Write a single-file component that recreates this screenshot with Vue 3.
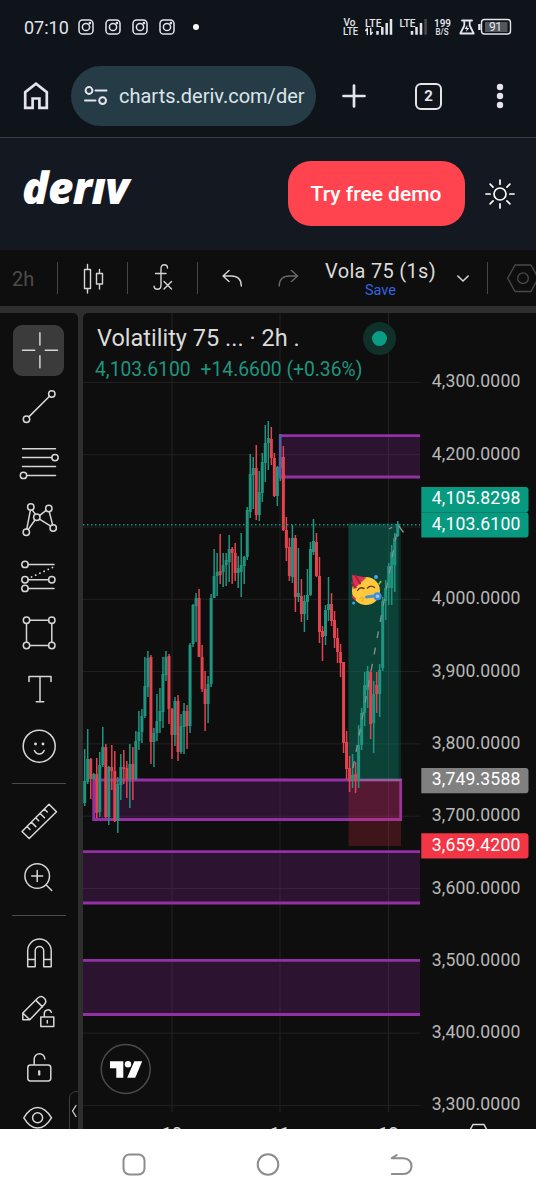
<template>
  <div class="screen">
    <!-- status bar -->
    <div class="status-bar">
      <span class="clock">07:10</span>
      <svg v-for="n in 4" :key="n" class="insta" viewBox="0 0 16 16">
        <rect x="1" y="1" width="14" height="14" rx="3.6" />
        <circle cx="8" cy="8" r="3.6" />
        <circle cx="11.9" cy="4.1" r=".6" />
      </svg>
      <span class="more-dot"></span>
      <svg class="signals" viewBox="342 14 172 26">
        <g class="tiny">
          <text x="343.5" y="25.8" textLength="12" lengthAdjust="spacingAndGlyphs">Vo</text>
          <text x="343" y="35" textLength="15" lengthAdjust="spacingAndGlyphs">LTE</text>
          <text x="365" y="26.8" textLength="16.5" lengthAdjust="spacingAndGlyphs">LTE</text>
          <text x="399.5" y="26.8" textLength="16" lengthAdjust="spacingAndGlyphs">LTE</text>
          <text x="434" y="27.3" textLength="17" lengthAdjust="spacingAndGlyphs" class="speed">199</text>
          <text x="435.5" y="35" textLength="13" lengthAdjust="spacingAndGlyphs" class="unit">B/S</text>
        </g>
        <path class="thin" d="M367.3 34.5v-6m0 0-1.6 2m5-2v6m0 0 1.6-2" />
        <path class="bars" d="M377.5 31v3.7M382.3 27v7.7M386.7 23v11.7M391 19v15.7M412 31v3.7M416.5 27v7.7M421 23v11.7" />
        <path class="bars dim" d="M425.6 19v15.7" />
        <path class="flask" d="M462 20.5h10M464.3 20.5v5L460.3 33.5h13.4l-4-8v-5" />
        <path class="bolt" d="M467.5 25l-3 4h2.2l-.6 3 3.2-4h-2.2z" />
        <rect class="battery" x="481.5" y="19.5" width="29" height="14.5" rx="3" />
        <rect class="charge" x="485" y="22" width="22.5" height="10" />
        <path class="bars" d="M479.4 24v6" />
        <text x="489" y="31.3" textLength="13" class="percent">91</text>
      </svg>
    </div>

    <!-- browser bar -->
    <div class="browser-bar">
      <svg class="home" viewBox="0 0 28 30">
        <path d="M3.2 26.8V11.2L14 2.7l10.8 8.5v15.6h-7.4v-9.3h-6.8v9.3z" />
      </svg>
      <div class="url">
        <svg viewBox="0 0 24 20">
          <circle cx="5" cy="4.5" r="3.4" />
          <circle cx="18.6" cy="14.6" r="3.4" />
          <path d="M11.5 4.5h11M1 14.6h10.5" />
        </svg>
        <span>charts.deriv.com/der</span>
      </div>
      <svg class="plus" viewBox="0 0 24 24"><path d="M12 1.5v21M1.5 12h21" /></svg>
      <span class="tab-count">2</span>
      <svg class="dots" viewBox="0 0 8 26">
        <circle cx="4" cy="4" r="3.2" /><circle cx="4" cy="13" r="3.2" /><circle cx="4" cy="22" r="3.2" />
      </svg>
    </div>

    <!-- site header -->
    <header class="site-header">
      <span class="logo" aria-label="deriv">derıv</span>
      <button class="demo-btn">Try free demo</button>
      <svg class="sun" viewBox="-15 -15 30 30">
        <circle r="6" />
        <path v-for="a in 8" :key="a" d="M0-9.8V-14" :transform="`rotate(${a * 45})`" />
      </svg>
    </header>

    <!-- chart toolbar -->
    <div class="toolbar">
      <span class="interval">2h</span>
      <span class="cell split">
        <svg viewBox="0 0 36 36">
          <path d="M9.500 9.500h6v19h-6zM12.500 9.500V4.500M12.500 28.500v4.500M21.500 13.500h6v10.500h-6zM24.500 13.500V9.500M24.500 24v5" />
        </svg>
      </span>
      <span class="cell split">
        <svg viewBox="0 0 36 36">
          <path d="M22.500 8c0-2-1.200-3.200-3.200-3.200-2.300 0-3.300 1.600-3.300 4.200v16c0 2.700-1.200 4.300-3.500 4.300-2 0-3.400-1.200-3.400-3.200M10.500 13.500h10.500M19 21.500l7.500 7.500M26.500 21.500L19 29" />
        </svg>
      </span>
      <span class="cell split">
        <svg viewBox="0 0 36 36"><path d="M14 10.500l-6 5.500 6 5.500M8 16h8c6.500 0 10.300 3.500 10.300 10" /></svg>
      </span>
      <span class="cell faded">
        <svg viewBox="0 0 36 36"><path d="M21.500 10.500l6 5.500-6 5.500M27.500 16h-8c-6.500 0-10.300 3.500-10.300 10" /></svg>
      </span>
      <span class="layout-name">
        <b>Vola 75 (1s)</b>
        <i>Save</i>
      </span>
      <span class="cell">
        <svg viewBox="0 0 36 36"><path class="heavy" d="M12.800 16l5.200 5 5.200-5" /></svg>
      </span>
      <span></span>
      <span class="cell split hexagon">
        <svg viewBox="0 0 36 36"><path d="M10 5h16l7.300 13.200L26 31.500H10L2.700 18.200z" /><circle cx="18" cy="18.200" r="5.300" /></svg>
      </span>
    </div>

    <!-- drawing tools + chart -->
    <main class="workspace">
      <aside class="tools">
        <template v-for="tool in tools" :key="tool.name">
          <hr v-if="tool.divided" />
          <button class="tool" :class="{ active: tool.active }" :title="tool.name">
            <svg viewBox="0 0 44 44">
              <path :d="tool.path" />
              <path v-if="tool.dotted" class="dotted" :d="tool.dotted" />
              <circle v-for="(c, i) in tool.circles" :key="i" :cx="c[0]" :cy="c[1]" :r="c[2] || 3.2" />
            </svg>
          </button>
        </template>
        <span class="collapse">
          <svg viewBox="0 0 8 14"><path d="M6 1.500L2.500 7 6 12.500" /></svg>
        </span>
      </aside>

      <section class="chart">
        <svg class="plot" viewBox="83 313 453 816">
          <!-- grid -->
          <g class="grid">
            <path v-for="p in gridPrices" :key="p" :d="`M83 ${priceY(p)}H420`" />
            <path v-for="d in days" :key="d.x" :d="`M${d.x} 313V1112`" />
          </g>

          <!-- zones -->
          <g v-for="z in zones" :key="z.top" class="zone">
            <rect :x="z.left" :y="z.top" :width="z.right - z.left" :height="z.bottom - z.top" />
            <path :d="z.edge" />
          </g>

          <!-- long position -->
          <rect class="profit" x="348.500" y="523.300" width="52.500" height="256.700" />
          <rect class="profit reached" x="348.500" y="524.500" width="50" height="255.500" />
          <rect class="loss" x="348.500" y="780" width="52.500" height="66" />
          <path class="entry" d="M348.500 780H401" />

          <!-- candles -->
          <g v-for="(c, i) in candles" :key="i" :class="c[4] ? 'down' : 'up'">
            <rect :x="candleX(i) - 0.75" :y="c[0]" width="1.5" :height="c[1] - c[0]" />
            <rect :x="candleX(i) - 1.5" :y="c[2]" width="3" :height="c[3] - c[2]" />
          </g>
          <path class="zone-side" d="M280.200 434.500v44" />

          <path class="trend" d="M353 768L398 526" />
          <path class="trend-head" d="M389 529l3-1.700M398.500 525.500l5 7" />
          <path class="last-price" d="M83 524.700H420" />

          <!-- sticker -->
          <g class="party">
            <circle cx="366" cy="591" r="14" fill="#ffc83d" />
            <path d="M352 575l14.500 2.500-13 12z" fill="#dc3150" />
            <path d="M355.500 575.500l4.500 8M352.200 583l3.500 4.500" stroke="#ab1d42" stroke-width="2" />
            <path d="M357.500 590.500q2.500-4 6.500-2M367.500 588q3.500-3.500 7-.5" stroke="#603516" stroke-width="1.400" />
            <path d="M360 598q2-1.800 3.300.3 0 2-1 3.200" stroke="#e49b22" stroke-width="1" />
            <path d="M366.500 597l7.500-1" stroke="#4d8fd6" stroke-width="3" />
            <circle cx="377.500" cy="596.300" r="4" fill="#3f8ee0" />
            <circle cx="377.500" cy="596.300" r="1.800" fill="#9bcbf3" />
            <circle cx="376" cy="577" r="2" fill="#46a4e8" />
            <circle cx="353.700" cy="603" r="1.500" fill="#46a4e8" />
            <path d="M379 584l1.800-2.500" stroke="#86c440" stroke-width="1.600" />
            <path d="M353 597l2 2" stroke="#dc3150" stroke-width="2" />
          </g>

          <!-- price scale -->
          <text v-for="p in labelPrices" :key="p" class="price" x="431.800" :y="priceY(p) + 5" textLength="88.500">{{ format(p) }}</text>
          <g v-for="t in tags" :key="t.value" :class="['tag', t.kind]">
            <path :d="`M421.300 ${t.y}h104.200a3 3 0 0 1 3 3v19.300a3 3 0 0 1-3 3h-104.200z`" />
            <text class="price" x="431.800" :y="t.y + 17.300" textLength="88.500">{{ t.value }}</text>
          </g>

          <!-- time scale -->
          <text v-for="d in days" :key="d.label" class="date" :x="d.x" y="1140.300">{{ d.label }}</text>
          <path class="scale-gear" d="M469 1132l4-7.500h11l4 7.500" />

          <!-- tradingview mark -->
          <circle class="tv-ring" cx="125.700" cy="1069" r="24.500" />
          <path class="tv-mark" d="M110 1061.300h13.300v16.400h-7v-9.400H110z" />
          <circle class="tv-mark" cx="128" cy="1064.300" r="3.200" />
          <path class="tv-mark" d="M134.300 1061.300h7.900l-7 16.400h-8z" />
        </svg>

        <div class="legend">
          <p class="symbol">Volatility 75 ... · 2h .</p>
          <p class="change"><span>4,103.6100</span><span>+14.6600 (+0.36%)</span></p>
        </div>
        <span class="market-dot"></span>
      </section>
    </main>

    <!-- android navigation -->
    <nav class="nav-bar">
      <svg viewBox="0 0 26 26"><rect x="2.500" y="2.500" width="21" height="20" rx="6" /></svg>
      <svg viewBox="0 0 26 26"><circle cx="13" cy="12.500" r="10.300" /></svg>
      <svg viewBox="0 0 26 26"><path d="M7.800 3L2.800 6.200h11.500c5 0 8.200 3.400 8.200 7.900s-3.200 8-8.200 8H2.800" /></svg>
    </nav>
  </div>
</template>

<script setup>
const tools = [
  { name: 'Cross', active: true, path: 'M5.5 22.2H17.7M28.3 22.2H40.5M22.9 4.8V17M22.9 27.7V39.8' },
  { name: 'Trend line', path: 'M11.8 31.9L32.5 11.3', circles: [[9.5, 34.2], [34.8, 9]] },
  {
    name: 'Fib retracement',
    path: 'M5.5 7.8h33M5.5 16.6h29.3M5.5 25.5h33M9.7 34.4h28.8',
    circles: [[38, 16.6], [6.5, 34.4]]
  },
  {
    name: 'Pattern',
    path: 'M13.4 12.2L9.8 31M15.1 11.9l3.4 4.5M22.5 17.6l6.6-5.3M32.3 13.7l3.3 13.2M18 22l-6.8 9.6M22.5 21.1l11.2 7',
    circles: [[13.8, 9], [31.8, 10.5], [19.8, 19.3], [9.3, 34.2], [36.2, 30]]
  },
  {
    name: 'Projection',
    path: 'M11.2 10.4H37M11.2 25.8H31.6M11.2 34.4H37',
    dotted: 'M14.5 23L35.5 13.5',
    circles: [[8, 10.4], [8, 25.8], [34.8, 25.8], [8, 34.4]]
  },
  {
    name: 'Rectangle',
    path: 'M12.7 9.3h18.9M12.7 34.5h18.9M9.5 12.5v18.8M34.8 12.5v18.8',
    circles: [[9.5, 9.3], [34.8, 9.3], [9.5, 34.5], [34.8, 34.5]]
  },
  { name: 'Text', path: 'M12 14.5V9.5h22v5M23 9.5v25.3M19.3 34.8h7.4' },
  {
    name: 'Icon',
    path: 'M17.5 26.5q1.5 3.5 4.8 3.5t4.8-3.5',
    circles: [[22.2, 22.2, 16], [18.5, 20, 0.7], [26, 20, 0.7]]
  },
  {
    name: 'Measure',
    divided: true,
    path: 'M5 32.5L32 5.2l7.5 7.5-27.3 26.8zM10 27.5l3 3M14.3 23.1l4.5 4.5M18.7 18.7l3 3M23 14.3l4.5 4.5M27.3 10l3 3'
  },
  { name: 'Zoom', path: 'M29 28.8l5.7 5.7M14.7 20h11M20.2 14.5v11', circles: [[20.2, 20, 12.3]] },
  {
    name: 'Magnet',
    divided: true,
    path: 'M10.7 35.8V19.8a11.75 11.75 0 0 1 23.5 0v16h-7.5v-16a4.25 4.25 0 0 0-8.5 0v16zM10.7 28.5h7.5M26.7 28.5h7.5'
  },
  {
    name: 'Keep drawing',
    path: 'M5.8 31.8V25L20.8 10q3.5-3 6.5 0.2t0 6.3L12.8 31.8zM5.8 25l7 6.8M18.7 12.1l6.8 6.8M23.8 29.1h13v9.4h-13zM27.3 29v-3.7a3.6 3.6 0 0 1 7-1M30.3 32.5v2.5'
  },
  {
    name: 'Lock',
    path: 'M13.5 21h17.6a2.7 2.7 0 0 1 2.7 2.7v10.6a2.7 2.7 0 0 1-2.7 2.7H13.5a2.7 2.7 0 0 1-2.7-2.7V23.7a2.7 2.7 0 0 1 2.7-2.7zM17.2 21v-6a5.3 5.3 0 0 1 10.6 0M21.8 27v3.7h.8V27z'
  },
  { name: 'Hide', path: 'M6.8 16.8Q13 6.5 20.6 6.5t13.9 10.3Q28.2 27 20.6 27T6.8 16.8z', circles: [[20.6, 16.8, 5]] }
]

// wick top, wick bottom, body top, body bottom, 1 when the candle closed lower
const candles = [
  [749, 806, 781, 803], [729, 784, 759, 782], [758, 799, 759, 779, 1], [773, 780, 774, 779],
  [758, 818, 774, 813, 1], [752, 817, 765, 812], [727, 767, 747, 765], [744, 818, 747, 817, 1],
  [766, 825, 767, 817], [745, 790, 767, 771, 1], [751, 822, 771, 821, 1], [777, 833, 784, 821],
  [754, 800, 767, 785], [750, 784, 767, 769, 1], [761, 798, 768, 779, 1], [744, 808, 764, 779],
  [747, 800, 764, 779, 1], [731, 780, 741, 779], [711, 750, 732, 741], [709, 743, 716, 732],
  [657, 718, 686, 716], [651, 697, 658, 687], [655, 764, 657, 742, 1], [728, 767, 733, 742],
  [694, 741, 721, 733], [688, 733, 711, 721], [657, 728, 674, 712], [651, 681, 657, 675],
  [654, 724, 656, 709, 1], [708, 759, 709, 735, 1], [697, 746, 701, 735], [695, 761, 701, 752, 1],
  [714, 754, 726, 752], [703, 754, 711, 727], [705, 749, 711, 726, 1], [643, 733, 645, 726],
  [604, 647, 605, 644], [593, 642, 598, 606], [589, 657, 598, 657, 1], [645, 692, 657, 689, 1],
  [671, 731, 689, 704, 1], [676, 723, 684, 704], [594, 687, 598, 684], [549, 598, 576, 598],
  [553, 596, 572, 576], [534, 584, 571, 575, 1], [553, 587, 565, 572], [553, 586, 560, 565],
  [535, 582, 549, 562], [547, 584, 549, 553, 1], [543, 581, 553, 573, 1], [556, 588, 568, 573],
  [533, 597, 565, 572], [556, 584, 557, 566], [507, 560, 510, 557], [454, 518, 474, 512],
  [457, 509, 468, 475], [445, 520, 468, 515, 1], [471, 521, 492, 515], [453, 502, 462, 493],
  [425, 482, 443, 463], [421, 470, 438, 443], [427, 465, 439, 458, 1], [453, 497, 458, 496, 1],
  [466, 506, 467, 496], [434, 481, 457, 468], [446, 531, 457, 530, 1], [517, 561, 530, 548, 1],
  [538, 581, 547, 576, 1], [525, 583, 538, 577], [535, 612, 538, 597, 1], [548, 602, 593, 597],
  [579, 622, 596, 614, 1], [595, 632, 601, 614], [569, 620, 595, 602], [542, 596, 549, 595],
  [519, 555, 541, 552], [533, 577, 542, 576, 1], [557, 643, 576, 632, 1], [626, 661, 631, 637, 1],
  [605, 645, 610, 636], [577, 621, 604, 610], [593, 626, 604, 621, 1], [611, 648, 620, 638, 1],
  [628, 663, 638, 652, 1], [644, 677, 652, 663, 1], [662, 753, 662, 743, 1], [731, 779, 742, 769, 1],
  [756, 792, 768, 780, 1], [754, 788, 775, 780], [762, 793, 774, 781, 1], [725, 788, 745, 780],
  [708, 750, 713, 745], [672, 726, 685, 713], [666, 708, 671, 690], [670, 739, 672, 724, 1],
  [681, 753, 694, 723], [672, 713, 685, 694, 1], [664, 717, 670, 694], [597, 671, 601, 668],
  [580, 620, 588, 601], [563, 605, 566, 588], [545, 605, 552, 588], [533, 592, 538, 565],
  [521, 537, 524, 536]
]

const zones = [
  { left: 280, right: 420, top: 435.7, bottom: 477, edge: 'M279 435.7H420M280 477H420' },
  { left: 94, right: 401, top: 780, bottom: 819.5, edge: 'M93.7 780H400.7V819.5H93.7z' },
  { left: 83, right: 420, top: 851.7, bottom: 903, edge: 'M83 851.7H420M83 903H420' },
  { left: 83, right: 420, top: 960.3, bottom: 1014.5, edge: 'M83 960.3H420M83 1014.5H420' }
]

const tags = [
  { value: '4,105.8298', y: 487, kind: 'up' },
  { value: '4,103.6100', y: 512.3, kind: 'up' },
  { value: '3,749.3588', y: 768, kind: 'flat' },
  { value: '3,659.4200', y: 833.2, kind: 'down' }
]

const days = [
  { x: 172, label: '10' },
  { x: 280, label: '11' },
  { x: 388.5, label: '12' }
]

const gridPrices = [4300, 4200, 4100, 4000, 3900, 3800, 3700, 3600, 3500, 3400, 3300]
// the 4,100 label is hidden under the last price tag
const labelPrices = gridPrices.filter((p) => p !== 4100)

const priceY = (price) => 382.4 + (4300 - price) * 0.723
const candleX = (i) => 84.7 + i * 3.01
const format = (price) => price.toLocaleString('en-US', { minimumFractionDigits: 4 })
</script>

<style>
body {
  background: #0e0e0e;
}
</style>

<style scoped>
.screen {
  width: 536px;
  height: 1200px;
  overflow: hidden;
  background: #0f131a;
  color: #e3e5ea;
  font-family: Roboto, sans-serif;
}

svg {
  display: block;
  flex: none;
  fill: none;
  stroke-linecap: round;
  stroke-linejoin: round;
}

/* status bar */
.status-bar {
  display: flex;
  align-items: center;
  height: 54px;
  padding-left: 24px;
  box-sizing: border-box;
}

.clock {
  width: 54.3px;
  font-size: 18px;
}

.insta {
  width: 16px;
  height: 16px;
  margin-right: 10.8px;
  stroke: #e3e5ea;
  stroke-width: 1.5;
}

.more-dot {
  width: 6px;
  height: 6px;
  margin-left: 8px;
  border-radius: 50%;
  background: #fff;
}

.signals {
  width: 172px;
  height: 26px;
  margin-left: 142.5px;
}

.signals text {
  fill: #e3e5ea;
  font-size: 11px;
  font-weight: 500;
}

.signals .speed {
  font-size: 11.5px;
  font-weight: 600;
}

.signals .unit {
  font-size: 9px;
}

.signals .percent {
  font-size: 12px;
  font-weight: 400;
}

.thin,
.flask,
.battery {
  stroke: #e3e5ea;
  stroke-width: 1.4;
}

.flask {
  stroke-width: 1.8;
}

.bolt {
  fill: #e3e5ea;
}

.bars {
  stroke: #e3e5ea;
  stroke-width: 2.5;
  stroke-linecap: butt;
}

.dim {
  stroke: #484b51;
}

.charge {
  fill: #53565b;
}

/* browser bar */
.browser-bar {
  display: flex;
  align-items: center;
  height: 84px;
  padding-top: 1px;
  padding-left: 22px;
  box-sizing: border-box;
  border-bottom: 1.5px solid #3a3d45;
}

.browser-bar svg {
  stroke: #e3e5ea;
}

.home {
  width: 28px;
  height: 30px;
  stroke-width: 2.7;
}

.home path {
  stroke-linejoin: miter;
}

.url {
  display: flex;
  align-items: center;
  width: 244.5px;
  height: 60px;
  margin-left: 21px;
  padding-left: 12.5px;
  box-sizing: border-box;
  border-radius: 30px;
  background: #253c47;
  font-size: 20px;
  white-space: nowrap;
  color: #dbe4e9;
}

.url svg {
  width: 24px;
  height: 20px;
  margin-right: 11.5px;
  stroke-width: 2;
}

.plus {
  width: 24px;
  height: 24px;
  margin-left: 26.5px;
  stroke-width: 2.7;
}

.tab-count {
  width: 27px;
  height: 27px;
  margin-left: 49px;
  box-sizing: border-box;
  border: 2.5px solid #e3e5ea;
  border-radius: 6px;
  font-size: 15px;
  font-weight: 700;
  line-height: 23px;
  text-align: center;
}

.dots {
  width: 8px;
  height: 26px;
  margin-left: 54px;
}

.browser-bar .dots {
  fill: #e3e5ea;
  stroke: none;
}

/* site header */
.site-header {
  display: flex;
  align-items: center;
  height: 112px;
  padding-left: 22px;
  padding-bottom: 1px;
  box-sizing: border-box;
  background: #141821;
}

.logo {
  width: 265.5px;
  margin-top: -13px;
  font: italic 800 44px/50px 'Open Sans', sans-serif;
  letter-spacing: -0.6px;
  color: #fff;
}

.demo-btn {
  width: 177px;
  height: 65px;
  padding: 0;
  border: none;
  border-radius: 23px;
  background: #ff444f;
  color: #fff;
  font: 500 21px Roboto, sans-serif;
  white-space: nowrap;
}

.sun {
  width: 30px;
  height: 30px;
  margin-left: 20.5px;
  stroke: #fff;
  stroke-width: 1.7;
}

/* chart toolbar */
.toolbar {
  display: grid;
  grid-template-columns: 57px 70px 70px 70px 42px 142px 24px 12px 60px;
  align-items: center;
  height: 56px;
  overflow: hidden;
  background: #0e0e0e;
}

.interval {
  padding: 2px 0 0 12px;
  font-size: 20px;
  color: #4c4c4c;
}

.cell {
  display: flex;
  align-items: center;
  justify-content: center;
  height: 32px;
}

.split {
  border-left: 1px solid #474747;
}

.cell svg {
  width: 36px;
  height: 36px;
  stroke: #d5d5d5;
  stroke-width: 1.4;
}

.cell .heavy {
  stroke-width: 1.6;
}

.cell.faded svg {
  stroke: #696969;
}

.hexagon {
  justify-content: flex-start;
  padding-left: 17px;
}

.cell.hexagon svg {
  stroke: #494949;
}

.layout-name {
  display: flex;
  flex-direction: column;
  align-items: center;
  padding: 2px 0 0 1px;
}

.layout-name b {
  font-size: 20px;
  font-weight: 400;
  line-height: 23px;
  letter-spacing: 0.3px;
  color: #dbdbdb;
}

.layout-name i {
  font-size: 14.5px;
  font-style: normal;
  line-height: 16px;
  color: #3563e0;
}

/* workspace */
.workspace {
  display: flex;
  gap: 5px;
  height: 823px;
  padding-top: 7px;
  box-sizing: border-box;
  background: #2e2e2e;
}

.tools {
  position: relative;
  display: flex;
  flex-direction: column;
  width: 78px;
  height: 816px;
  padding-top: 9px;
  box-sizing: border-box;
  overflow: hidden;
  border-top-right-radius: 5px;
  background: #0e0e0e;
}

.tool {
  display: flex;
  flex: none;
  justify-content: center;
  align-items: center;
  width: 51px;
  height: 51px;
  margin: 2.75px 0 2.75px 13px;
  padding: 0;
  border: none;
  border-radius: 9px;
  background: none;
}

.tool.active {
  background: #3b3b3b;
}

.tool svg {
  width: 44px;
  height: 44px;
  stroke: #d6d6d6;
  stroke-width: 1.5;
}

.tool .dotted {
  stroke-width: 1.8;
  stroke-dasharray: 0.1 4.5;
}

.tools hr {
  flex: none;
  width: 54px;
  height: 1px;
  margin: 9px 12px;
  border: none;
  background: #4a4a4a;
}

.collapse {
  position: absolute;
  right: -5px;
  bottom: -8px;
  width: 14px;
  height: 46px;
  box-sizing: border-box;
  border: 1px solid #3d3d3d;
  border-radius: 7px;
  background: #0e0e0e;
}

.collapse svg {
  width: 8px;
  height: 14px;
  margin-top: 12px;
  stroke: #d6d6d6;
  stroke-width: 1.3;
}

.chart {
  position: relative;
  width: 453px;
  height: 816px;
  overflow: hidden;
  border-top-left-radius: 5px;
  background: #0e0e0e;
}

.plot {
  width: 453px;
  height: 816px;
}

.grid path {
  stroke: #222;
  stroke-width: 1;
}

.up rect {
  fill: #1f9580;
}

.down rect {
  fill: #e2434f;
}

.zone rect {
  fill: #9c27b0;
  fill-opacity: 0.21;
}

.zone path {
  stroke: #9430a5;
  stroke-width: 2.8;
  stroke-linecap: butt;
  stroke-linejoin: miter;
}

.zone-side {
  stroke: #5e5ba6;
  stroke-width: 2.6;
  stroke-linecap: butt;
}

.profit {
  fill: #089981;
  fill-opacity: 0.21;
}

.reached {
  fill-opacity: 0.2;
}

.loss {
  fill: #f23645;
  fill-opacity: 0.21;
}

.entry {
  stroke: #8d8d8d;
  stroke-width: 1.2;
}

.trend,
.trend-head {
  stroke: #87918e;
  stroke-width: 1.3;
  stroke-linecap: butt;
}

.trend {
  stroke-dasharray: 7 9.5;
}

.last-price {
  stroke: #159582;
  stroke-width: 1.5;
  stroke-dasharray: 1.5 2.5;
  stroke-linecap: butt;
}

.price {
  fill: #b8b8b8;
  font-size: 17.6px;
}

.tag .price {
  fill: #fff;
}

.tag.up path {
  fill: #089981;
}

.tag.flat path {
  fill: #808080;
}

.tag.down path {
  fill: #f23645;
}

.date {
  fill: #dbdbdb;
  font-size: 17.8px;
  text-anchor: middle;
}

.scale-gear {
  stroke: #dbdbdb;
  stroke-width: 1.5;
}

.tv-ring {
  fill: #0e0e0e;
  stroke: #4a4a4a;
  stroke-width: 1.5;
}

.tv-mark {
  fill: #fff;
}

.legend {
  position: absolute;
  top: 10px;
  left: 12px;
  white-space: nowrap;
}

.legend p {
  margin: 0;
}

.symbol {
  padding-left: 2px;
  font-size: 23.5px;
  line-height: 31px;
  color: #dbdbdb;
}

.change {
  display: flex;
  gap: 10px;
  font-size: 19.3px;
  line-height: 31px;
  color: #1f9580;
}

.market-dot {
  position: absolute;
  top: 8.5px;
  left: 280px;
  width: 15px;
  height: 15px;
  border: 9px solid #10302a;
  border-radius: 50%;
  background: #0a9c84;
}

/* android navigation */
.nav-bar {
  display: flex;
  justify-content: center;
  align-items: center;
  gap: 108px;
  height: 71px;
  background: #fff;
}

.nav-bar svg {
  width: 26px;
  height: 26px;
  stroke: #8c8c8c;
  stroke-width: 2;
}
</style>
